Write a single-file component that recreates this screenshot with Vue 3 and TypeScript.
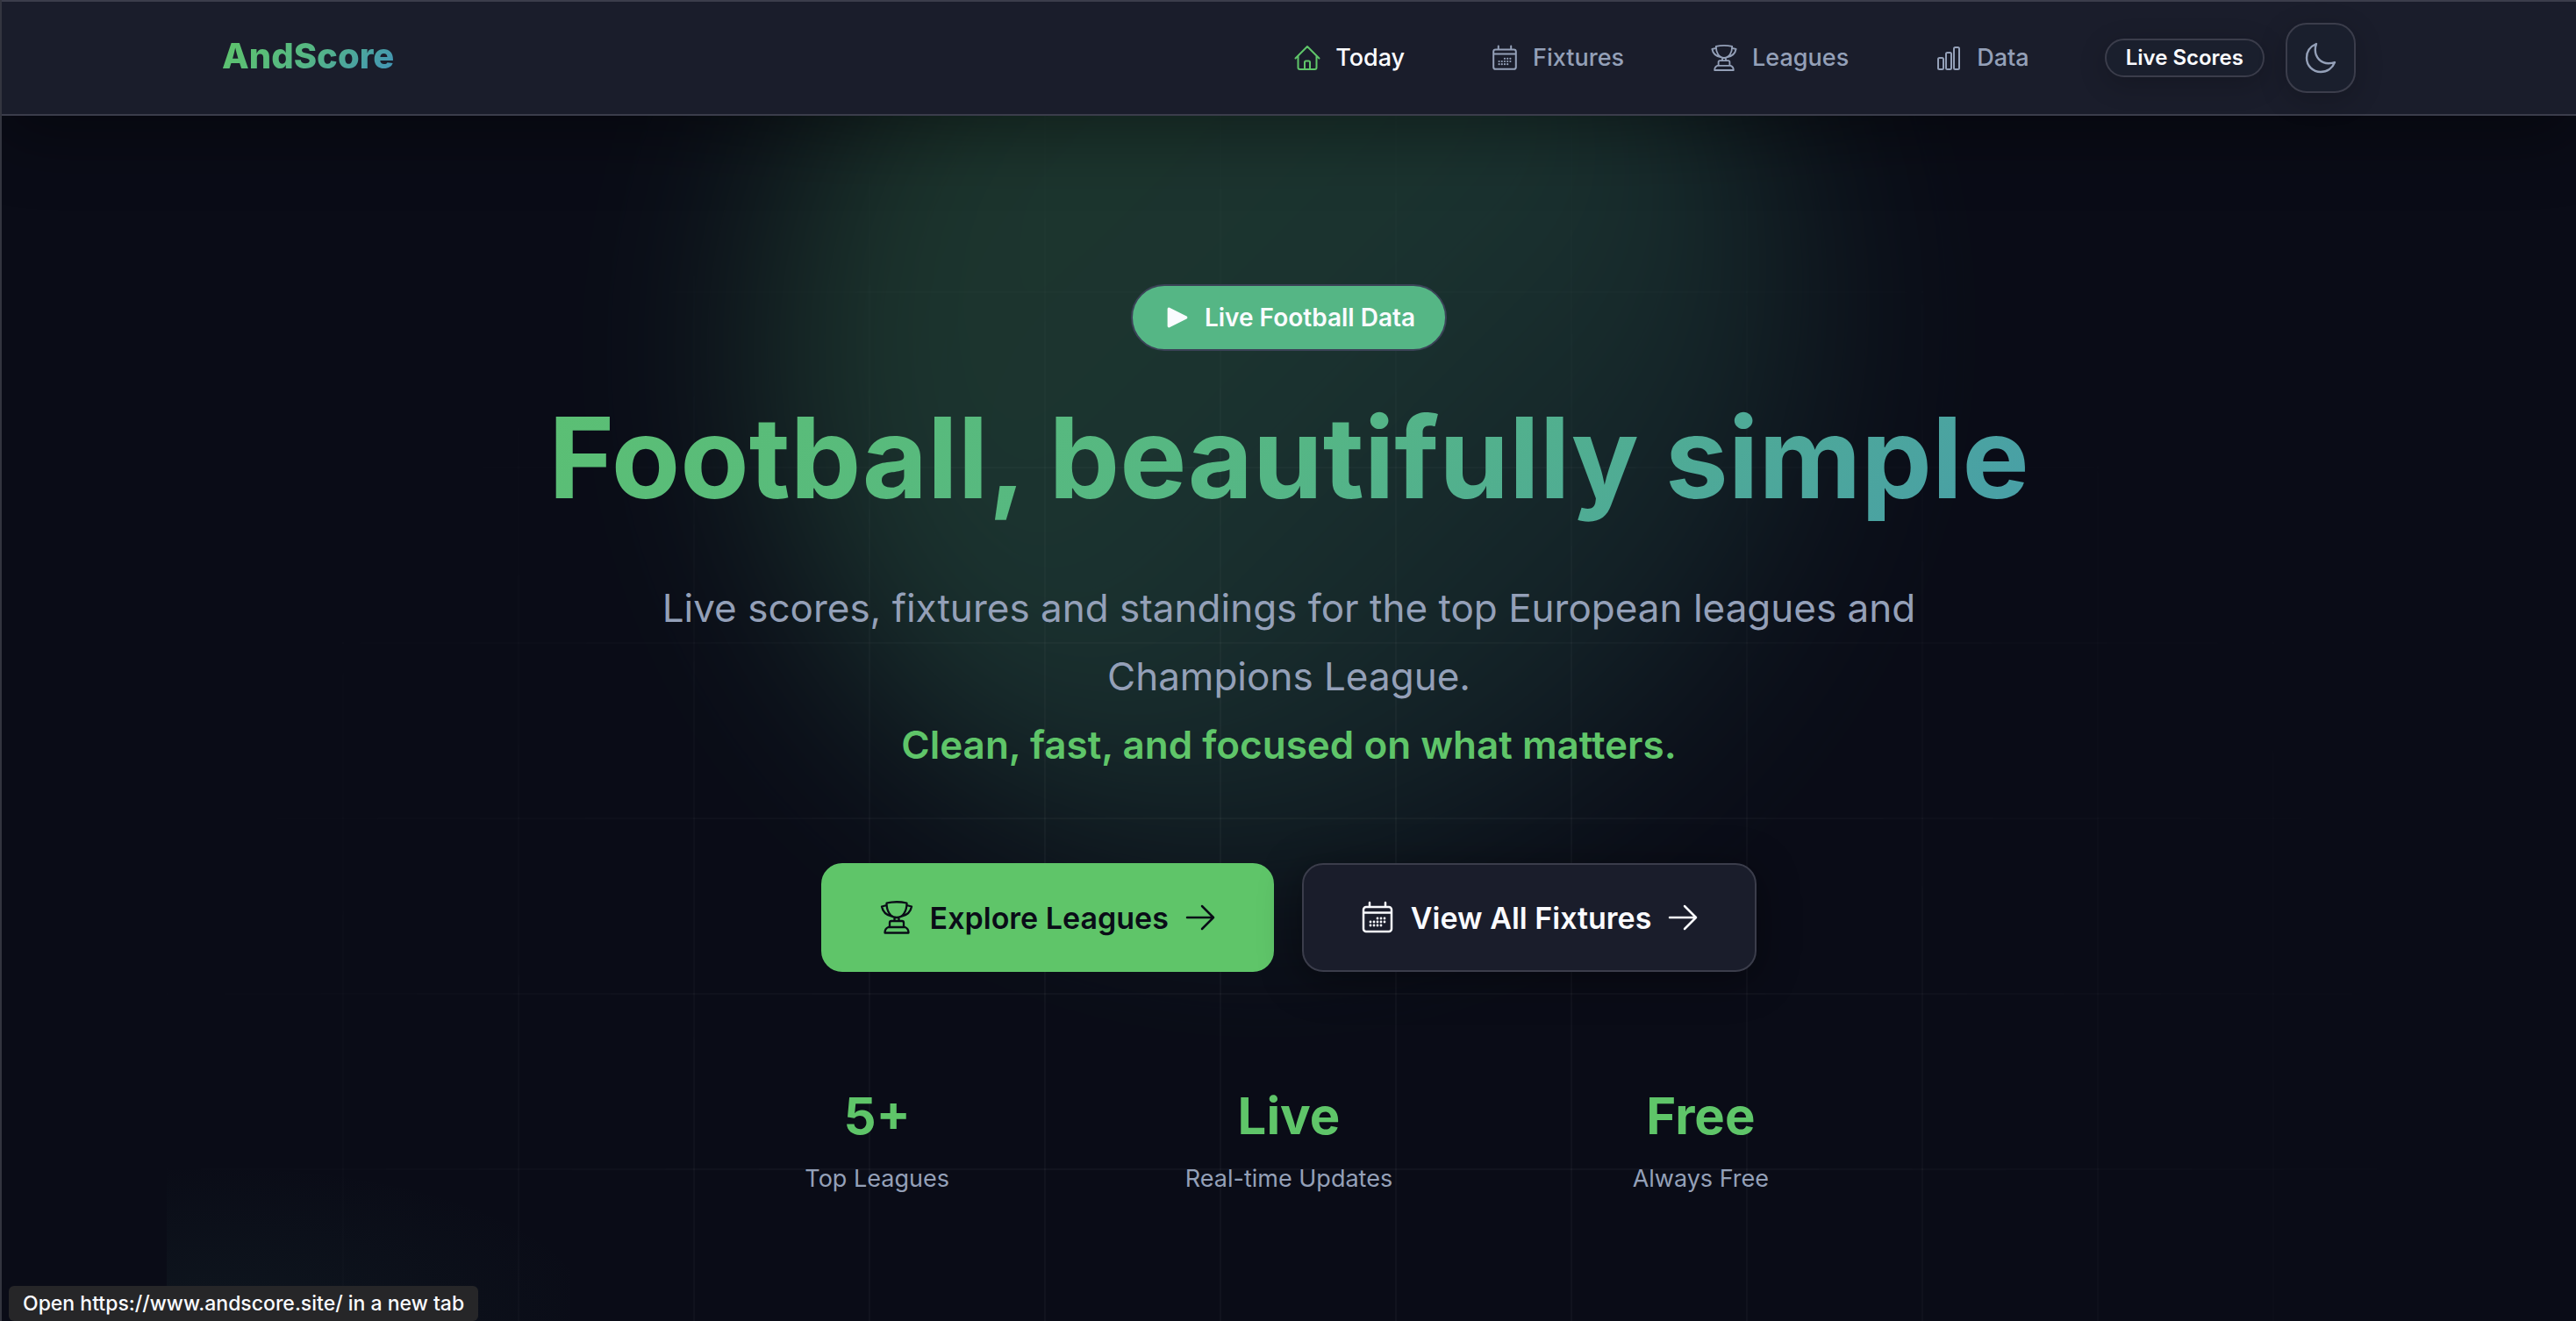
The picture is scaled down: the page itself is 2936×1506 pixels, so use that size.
<script setup lang="ts">
import { ref } from 'vue'

type IconName = 'home' | 'calendar' | 'trophy' | 'bars'

interface NavItem {
  label: string
  icon: IconName
  href: string
}

interface Stat {
  value: string
  label: string
}

const navItems: NavItem[] = [
  { label: 'Today', icon: 'home', href: '#today' },
  { label: 'Fixtures', icon: 'calendar', href: '#fixtures' },
  { label: 'Leagues', icon: 'trophy', href: '#leagues' },
  { label: 'Data', icon: 'bars', href: '#data' },
]

const stats: Stat[] = [
  { value: '5+', label: 'Top Leagues' },
  { value: 'Live', label: 'Real-time Updates' },
  { value: 'Free', label: 'Always Free' },
]

const active = ref<string>('Today')
</script>

<template>
  <svg class="sprite" aria-hidden="true">
    <symbol id="home" viewBox="0 0 32 32">
      <path d="M2.500 16.500 16 3 29.500 16.500M5.500 14V27a2 2 0 0 0 2 2h17a2 2 0 0 0 2-2V14M13 29v-8a1.500 1.500 0 0 1 1.500-1.500h3a1.500 1.500 0 0 1 1.500 1.500v8" />
    </symbol>
    <symbol id="calendar" viewBox="0 0 40 40">
      <path stroke-width="2.5" d="M7 8h26a3 3 0 0 1 3 3v22a3 3 0 0 1-3 3H7a3 3 0 0 1-3-3V11a3 3 0 0 1 3-3zM4 14.500h32M11 3v5M29 3v5" />
      <path stroke-width="2.8" d="M20 21h0M24 21h0M28 21h0M12 25h0M16 25h0M20 25h0M24 25h0M28 25h0M12 29h0M16 29h0M20 29h0M24 29h0" />
    </symbol>
    <symbol id="trophy" viewBox="0 0 40 40">
      <path stroke-width="2.3" d="M8.500 3.500Q20 1 31.500 3.500C31.500 12.500 27.500 20 20 20S8.500 12.500 8.500 3.500zM8.500 6 3 7.500C4 13 8.500 17.500 15 19M31.500 6 37 7.500C36 13 31.500 17.500 25 19M17.500 20v4M22.500 20v4M12 31v-5a2 2 0 0 1 2-2h12a2 2 0 0 1 2 2v5M10.500 31h19c2.500 1 4 3 4 6.500h-27c0-3.500 1.500-5.500 4-6.500z" />
    </symbol>
    <symbol id="bars" viewBox="0 0 32 32">
      <rect x="4" y="16" width="6" height="13" rx="1.500" />
      <rect x="13" y="10" width="6" height="19" rx="1.500" />
      <rect x="22" y="4" width="6" height="25" rx="1.500" />
    </symbol>
    <symbol id="arrow" viewBox="0 0 36 36">
      <path stroke-width="2.5" d="M3 18h30M20 5l13 13-13 13" />
    </symbol>
  </svg>

  <div class="page">
    <header class="header">
      <div class="bar">
        <a class="logo" href="#home">AndScore</a>
        <nav class="nav" aria-label="Main">
          <a
            v-for="item in navItems"
            :key="item.label"
            class="nav-link"
            :class="{ active: active === item.label }"
            :href="item.href"
            @click="active = item.label"
          >
            <svg class="icon nav-icon" aria-hidden="true"><use :href="'#' + item.icon" /></svg>
            <span>{{ item.label }}</span>
          </a>
        </nav>
        <a class="pill" href="#live">Live Scores</a>
        <button class="theme" type="button" aria-label="Toggle theme">
          <svg class="icon moon" viewBox="0 0 36 36" aria-hidden="true">
            <path stroke-width="2.4" d="M13 2C6 5 2 11 2 18c0 9 7 16 16 16 7.500 0 13.500-4.500 16-11-2 .8-4.500 1.200-7 1.200C18.500 24.200 11.800 17.500 11.800 9c0-2.500.4-5 1.200-7z" />
          </svg>
        </button>
      </div>
    </header>

    <main class="hero">
      <div class="glow" aria-hidden="true"></div>
      <div class="haze" aria-hidden="true"></div>
      <div class="grid" aria-hidden="true"></div>
      <div class="content">
        <div class="badge">
          <svg class="play" viewBox="0 0 24 24" aria-hidden="true">
            <path d="M3 3v18l18-9z" />
          </svg>
          <span>Live Football Data</span>
        </div>
        <h1 class="title">Football, beautifully simple</h1>
        <p class="lead">
          Live scores, fixtures and standings for the top European leagues and Champions League.
          <strong>Clean, fast, and focused on what matters.</strong>
        </p>
        <div class="actions">
          <a class="btn primary" href="#leagues">
            <svg class="icon btn-icon" aria-hidden="true"><use href="#trophy" /></svg>
            <span>Explore Leagues</span>
            <svg class="icon arrow" aria-hidden="true"><use href="#arrow" /></svg>
          </a>
          <a class="btn secondary" href="#fixtures">
            <svg class="icon btn-icon" aria-hidden="true"><use href="#calendar" /></svg>
            <span>View All Fixtures</span>
            <svg class="icon arrow" aria-hidden="true"><use href="#arrow" /></svg>
          </a>
        </div>
        <dl class="stats">
          <div v-for="stat in stats" :key="stat.label" class="stat">
            <dt>{{ stat.label }}</dt>
            <dd>{{ stat.value }}</dd>
          </div>
        </dl>
      </div>
    </main>

    <div class="status" role="status">Open https://www.andscore.site/ in a new tab</div>
  </div>
</template>

<style>
body {
  margin: 0;
  background: #0a0c17;
}
</style>

<style scoped>
.sprite {
  position: absolute;
  width: 0;
  height: 0;
}

.page {
  position: relative;
  display: flex;
  flex-direction: column;
  box-sizing: border-box;
  min-height: 100vh;
  overflow: hidden;
  border-left: 2px solid #33353f;
  background: #0a0c17;
  color: #fafbff;
  font-family: Inter, "Liberation Sans", sans-serif;
}

a {
  color: inherit;
  text-decoration: none;
}

.icon {
  flex: none;
  fill: none;
  stroke: currentColor;
  stroke-width: 2;
  stroke-linecap: round;
  stroke-linejoin: round;
}

.header {
  position: relative;
  z-index: 2;
  border-top: 2px solid #3b3d4b;
  border-bottom: 2px solid #3b3d4b;
  background: #1a1d2b;
  box-shadow: 0 20px 80px rgba(0, 0, 0, 0.4);
}

.bar {
  display: flex;
  align-items: center;
  box-sizing: border-box;
  max-width: 2560px;
  height: 128px;
  margin: 0 auto;
  padding: 0 64px;
}

.logo {
  margin-right: auto;
  padding-bottom: 4px;
  background: linear-gradient(135deg, #5fc569 0%, #55b685 50%, #4090bd 100%);
  background-clip: text;
  -webkit-background-clip: text;
  color: transparent;
  font-size: 40px;
  font-weight: 800;
  line-height: 48px;
}

.nav {
  display: flex;
  gap: 98px;
  margin-right: 86px;
}

.nav-link {
  display: flex;
  align-items: center;
  gap: 16px;
  color: #94a0b8;
  font-size: 27px;
  font-weight: 500;
  line-height: 40px;
}

.nav-link.active {
  color: #fafbff;
}

.nav-link.active .nav-icon {
  color: #5fc569;
}

.nav-icon {
  width: 32px;
  height: 32px;
}

.pill {
  box-sizing: border-box;
  height: 44px;
  margin-right: 24px;
  padding: 0 22px;
  border: 2px solid #3b3d4b;
  border-radius: 22px;
  background: #1a1f2d;
  box-shadow: 0 8px 32px rgba(0, 0, 0, 0.2);
  font-size: 24px;
  font-weight: 600;
  line-height: 40px;
}

.theme {
  display: flex;
  align-items: center;
  justify-content: center;
  width: 80px;
  height: 80px;
  padding: 0;
  border: 2px solid #3b3d4b;
  border-radius: 24px;
  background: #1a1f2d;
  box-shadow: 0 8px 32px rgba(0, 0, 0, 0.2);
  color: #94a0b8;
}

.moon {
  width: 36px;
  height: 36px;
}

.hero {
  position: relative;
  flex: 1;
  padding: 192px 64px 112px;
}

.glow {
  position: absolute;
  top: -332px;
  left: 50%;
  width: 1200px;
  height: 1200px;
  margin-left: -600px;
  border-radius: 50%;
  background: linear-gradient(135deg, #5fc569 0%, #55b685 50%, rgba(64, 144, 189, 0.2) 100%);
  filter: blur(116px);
  opacity: 0.23;
}

.haze {
  position: absolute;
  bottom: 0;
  left: 188px;
  width: 460px;
  height: 200px;
  background: radial-gradient(ellipse 440px 180px at 60px 200px, rgba(85, 182, 150, 0.06), transparent);
}

.grid {
  position: absolute;
  inset: 0;
  background-image:
    linear-gradient(to right, rgba(255, 255, 255, 0.03) 2px, transparent 2px),
    linear-gradient(to bottom, rgba(255, 255, 255, 0.03) 2px, transparent 2px);
  background-size: 200px 200px;
  background-position: 188px 0;
  -webkit-mask-image: radial-gradient(1400px 1500px at 50% 1300px, #000 40%, transparent 100%);
  mask-image: radial-gradient(1400px 1500px at 50% 1300px, #000 40%, transparent 100%);
}

.content {
  position: relative;
  display: flex;
  flex-direction: column;
  align-items: center;
  text-align: center;
}

.badge {
  display: flex;
  align-items: center;
  gap: 18px;
  box-sizing: border-box;
  height: 76px;
  padding: 0 34px 0 38px;
  border: 2px solid #3b4257;
  border-radius: 38px;
  background: #55b685;
  font-size: 28px;
  font-weight: 600;
}

.play {
  width: 26px;
  height: 26px;
  fill: currentColor;
  stroke: currentColor;
  stroke-width: 3;
  stroke-linejoin: round;
}

.title {
  align-self: stretch;
  margin: 42px 0 0;
  background: linear-gradient(135deg, #5fc569 0%, #55b685 50%, #4090bd 100%);
  background-clip: text;
  -webkit-background-clip: text;
  color: transparent;
  font-size: 128px;
  font-weight: 700;
  line-height: 160px;
}

.lead {
  max-width: 1536px;
  margin: 52px 0 0;
  color: #94a0b8;
  font-size: 44px;
  line-height: 78px;
}

.lead strong {
  display: block;
  color: #5fc569;
  font-weight: 600;
}

.actions {
  display: flex;
  gap: 32px;
  margin-top: 96px;
}

.btn {
  display: flex;
  align-items: center;
  gap: 18px;
  box-sizing: border-box;
  height: 124px;
  padding: 0 64px;
  border: 2px solid transparent;
  border-radius: 24px;
  font-size: 34px;
  font-weight: 600;
}

.primary {
  border-color: #5fc569;
  background: #5fc569;
  color: #0a0c17;
}

.secondary {
  border-color: #3b3d4b;
  background: #1a1d2b;
  box-shadow: 0 8px 48px rgba(0, 0, 0, 0.4);
}

.btn-icon {
  width: 40px;
  height: 40px;
}

.arrow {
  width: 36px;
  height: 36px;
}

.stats {
  display: grid;
  grid-template-columns: repeat(3, 1fr);
  width: 100%;
  max-width: 1408px;
  margin: 128px 0 0;
}

.stat {
  display: flex;
  flex-direction: column-reverse;
  gap: 16px;
}

.stat dt {
  color: #94a0b8;
  font-size: 27px;
  line-height: 40px;
}

.stat dd {
  margin: 0;
  color: #5fc569;
  font-size: 58px;
  font-weight: 700;
  line-height: 72px;
}

.status {
  position: absolute;
  z-index: 3;
  bottom: 0;
  left: 8px;
  padding: 0 16px;
  border-radius: 6px;
  background: #262628;
  font-size: 23px;
  font-weight: 500;
  line-height: 40px;
}
</style>
